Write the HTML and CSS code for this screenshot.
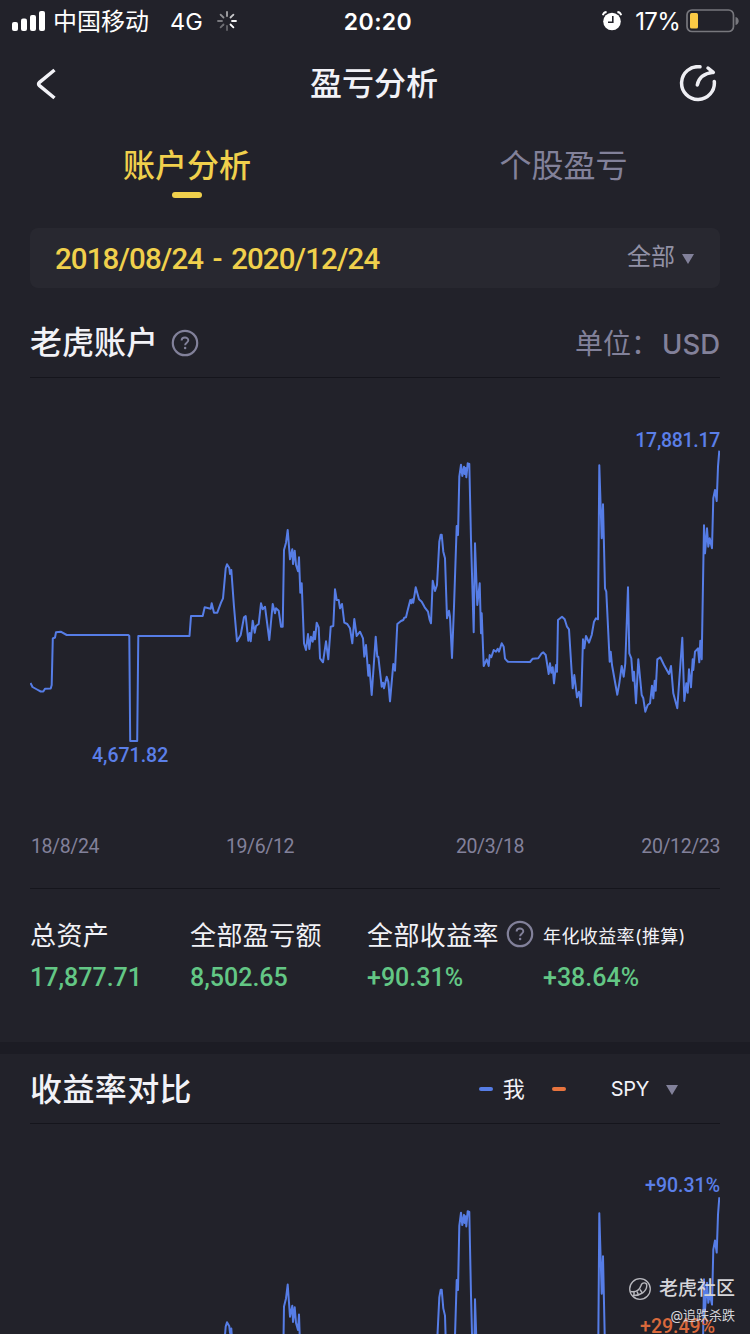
FILE: index.html
```
<!DOCTYPE html>
<html lang="zh-CN">
<head>
    <meta charset="UTF-8">
    <meta name="viewport" content="width=device-width, initial-scale=1.0">
    <title>盈亏分析</title>
    <link rel="stylesheet" href="styles.css">
</head>
<body>
    <div class="app">
        <div class="status-bar">
            <div class="status-left">
                <svg class="signal" width="34" height="20" viewBox="0 0 34 20" fill="#fff">
                    <rect x="0" y="11" width="6" height="9" rx="2"/>
                    <rect x="9" y="7.500" width="6" height="12.500" rx="2"/>
                    <rect x="18" y="4" width="6" height="16" rx="2"/>
                    <rect x="27" y="0" width="6" height="20" rx="2"/>
                </svg>
                <span class="carrier">中国移动</span>
                <span class="network">4G</span>
                <svg class="spinner" width="20" height="20" viewBox="-10 -10 20 20" stroke="#fff" stroke-width="1.800" stroke-linecap="round">
                    <path d="M0-5V-9" opacity=".6"/>
                    <path d="M3.500-3.500L6.400-6.400" opacity=".75"/>
                    <path d="M5 0H9" opacity=".95"/>
                    <path d="M3.500 3.500L6.400 6.400"/>
                    <path d="M0 5V9" opacity=".3"/>
                    <path d="M-3.500 3.500L-6.400 6.400" opacity=".35"/>
                    <path d="M-5 0H-9" opacity=".4"/>
                    <path d="M-3.500-3.500L-6.400-6.400" opacity=".5"/>
                </svg>
            </div>
            <span class="clock">20:20</span>
            <div class="status-right">
                <svg class="alarm" width="20" height="20" viewBox="0 0 20 20">
                    <circle cx="10" cy="10.500" r="8.800" fill="#fff"/>
                    <path d="M.8 4.200Q1.500 1.300 4.600 1M19.200 4.200Q18.500 1.300 15.400 1" fill="none" stroke="#fff" stroke-width="1.800"/>
                    <path d="M10.800 5V11.200H6" fill="none" stroke="#22222a" stroke-width="1.600"/>
                </svg>
                <span class="battery-text">17%</span>
                <svg class="battery" width="54" height="24" viewBox="0 0 54 24">
                    <rect x="1" y="1" width="46.500" height="21.500" rx="5" fill="none" stroke="#77777d" stroke-width="1.700"/>
                    <rect x="4" y="4" width="8" height="15.500" rx="1.500" fill="#fbca45"/>
                    <path d="M49.500 8C53.800 9 53.800 15 49.500 16Z" fill="#77777d"/>
                </svg>
            </div>
        </div>

        <div class="nav-bar">
            <svg class="back" width="22" height="32" viewBox="0 0 22 32">
                <path d="M19.500 2L4.500 14.300Q2.800 16 4.500 17.700L19.500 30" fill="none" stroke="#f2f2f7" stroke-width="3.500"/>
            </svg>
            <h1>盈亏分析</h1>
            <svg class="share" width="38" height="38" viewBox="0 0 38 38" fill="none" stroke="#eeeef3" stroke-width="3.500" stroke-linecap="round">
                <path d="M21 1.800A16.400 16.400 0 1 0 35.300 16.500"/>
                <path d="M18.300 20C19.500 13.500 25 8.500 34 7.300M29 3L34.300 7.300"/>
            </svg>
        </div>

        <div class="tabs">
            <div class="tab active">账户分析</div>
            <div class="tab">个股盈亏</div>
        </div>

        <div class="date-range">
            <span class="range-text">2018/08/24 - 2020/12/24</span>
            <span class="range-filter">全部<i class="caret"></i></span>
        </div>

        <div class="section account">
            <div class="section-header">
                <h2>老虎账户</h2>
                <svg class="help" width="28" height="28"><use href="#help"/></svg>
                <span class="unit">单位：<b>USD</b></span>
            </div>

            <div class="chart">
                <svg width="690" height="430" viewBox="30 378 690 430">
                    <defs>
                        <symbol id="help" viewBox="0 0 28 28">
                            <circle cx="14" cy="14" r="12.200" fill="none" stroke="#82819a" stroke-width="2.200"/>
                            <path d="M10.600 11.600C10.600 7.500 17.300 7.600 17.300 11.300C17.300 13.700 14.100 13.600 14.100 16.200" fill="none" stroke="#82819a" stroke-width="1.900"/>
                            <circle cx="14.100" cy="19" r="1.250" fill="#82819a"/>
                        </symbol>
                        <polyline id="curve" vector-effect="non-scaling-stroke" points="
                            30.500,683 32.500,687 37,689.500 40.700,691.500 43.300,691.500 45,688.700 50.700,688.500 51.700,685 52.800,638.500 55,637.500
                            56,632.300 60.700,631.700 66.700,635 128.300,635 129.300,636 130.200,741 137.200,741 138.300,636 189.500,636 191,616
                            202.700,616 204.700,607.300 210.700,608.700 211.700,603.300 214,612.700 217.300,612.700 221,602.700 223,598.300 225.700,568.300
                            227,564.300 229.300,568 230,574 231.300,570 234,606.700 237,641.300 240.700,635 244,617.300 245.700,616 248.300,640.700
                            249.700,633 250.700,641.300 252.700,620.700 254.700,632.700 256,626 258.700,624 261,603.300 262.700,609.300 265,606.700
                            269.300,640 272.700,604 275,613.300 276,608.300 278.700,610.700 281,626.700 282.700,626.700 284,550 286,542.700 287.700,530
                            290,559.300 292.300,549.300 293,564 294.700,550.700 296,565 298,571.300 299,557.300 300.300,592.700 301.700,583.300 304,643.300
                            306,650 308,634 309.300,649 311,636.700 312.700,641.700 314,631.700 315,639.300 316.700,622.700 318.700,627.300 320,658.300
                            323,662.300 326,641.300 328.300,659.300 330.700,626.700 333.300,626 335,589.300 336.700,600 338.700,600 340,608.300 342,604
                            344.300,622.700 347.300,624 350,628.300 352.300,643.300 354.300,619 356.700,636 360,631.700 363,638.300 364.300,656.700
                            366,645 368.300,675.700 369.300,665 371.700,695 375.700,636.700 377.300,656.700 378.300,656.700 381.700,686.700 383,682.700
                            384,688.300 386.700,676.700 388.300,681.700 390,701.300 393.300,664 395,670.700 397.300,624 401,621 403.300,620 404.300,617.700
                            406,617.300 407.300,611.700 410.300,600 411.300,603.300 412.300,599.300 413.300,602.700 415.700,587.300 419,599.300 421.700,601.700
                            424.700,607.300 428,611.700 429.700,620 431,623.300 432.700,580.700 435,591 437,585 439.300,541.700 440.700,534.700
                            441.700,534.700 443.300,551.700 445,558.300 447,618.300 449,610.700 450,616.700 452,658 454,606.700 456.700,526 458,535
                            459.300,476.700 461,464.700 462.300,476 464,466.700 464.700,474 465.700,468 466.300,477.300 467.700,463.300 469.300,464
                            471,540 473.700,632.300 475,543.300 477.300,605 479.700,583.300 481,633.300 481.700,613.300 483.700,666 486.700,659.300
                            488.700,666 489.700,655 491.300,657.300 493.700,650 496,651.700 497.700,648.700 499,651.700 501.700,643.300 503.700,646.700
                            505,658.700 507.700,661.700 530,662 532.700,658.700 538.300,658.300 541.700,653.300 543.300,652.300 545.700,655 548.700,674
                            550,663.300 551.300,672.700 552.700,667.300 554,683.300 556,665 557,671.700 558,620 562,616.700 564.700,619.300
                            567,626.700 569,629.300 572.700,688.300 574.300,675 577,697.300 579,691.700 581,706 583,639.300 584.300,648.300 586,636
                            589,642.700 591.700,635 594,621.700 596,618.300 598,619.300 599.300,465.300 601.700,538.300 603,504.300 605,588.300
                            606.300,591.700 609.700,661.700 610.700,651.700 612,665 617.300,694.700 619.300,683.300 621.700,666 623.700,676.700
                            625.300,663.300 628,587.300 629.300,653.300 631.300,658.300 633,680.700 634,671.700 636,703.300 638.300,659.300
                            641.700,695 643.300,698.300 645.300,711.700 647.700,705 650,703.300 652,685.700 653.300,698.300 654.700,680.700
                            655.700,690.700 657.300,659.300 660.300,657.300 664,665 669,674 671,666 673.300,693.300 677.300,708.300 680,670
                            682.300,637.700 684.300,701 686.300,683.300 687.700,692.700 689,669.300 691,687.300 692.700,659.300 693.300,670
                            695,651.700 698,648.300 699.300,662.300 700.300,640.700 701.700,659.300 704,525.300 705,553.300 707,528.300 708.300,546.700
                            709.700,538.300 712,548.300 713.300,498.300 715,490 716.700,501 718,466.700 719.300,450.700"/>
                    </defs>
                    <use href="#curve" class="line"/>
                </svg>
                <span class="max-label">17,881.17</span>
                <span class="min-label">4,671.82</span>
            </div>

            <div class="axis">
                <span>18/8/24</span>
                <span>19/6/12</span>
                <span>20/3/18</span>
                <span>20/12/23</span>
            </div>

            <div class="stats">
                <div class="stat-item">
                    <div class="stat-label">总资产</div>
                    <div class="stat-value">17,877.71</div>
                </div>
                <div class="stat-item">
                    <div class="stat-label">全部盈亏额</div>
                    <div class="stat-value">8,502.65</div>
                </div>
                <div class="stat-item">
                    <div class="stat-label">全部收益率<svg class="help" width="28" height="28"><use href="#help"/></svg></div>
                    <div class="stat-value">+90.31%</div>
                </div>
                <div class="stat-item">
                    <div class="stat-label small">年化收益率(推算)</div>
                    <div class="stat-value">+38.64%</div>
                </div>
            </div>
        </div>

        <div class="section compare">
            <div class="section-header">
                <h2>收益率对比</h2>
                <div class="legend">
                    <i class="dash me"></i>
                    <span class="legend-me">我</span>
                    <i class="dash spy"></i>
                    <span class="legend-spy">SPY</span>
                    <i class="caret"></i>
                </div>
            </div>
            <div class="chart">
                <svg width="690" height="210" viewBox="30 1124 690 210">
                    <use href="#curve" class="line" transform="translate(0 701.500) scale(1 1.100)"/>
                </svg>
                <span class="max-label">+90.31%</span>
                <span class="spy-label">+29.49%</span>
            </div>
        </div>

        <div class="watermark">
            <div class="watermark-brand">
                <svg width="24" height="24" viewBox="0 0 24 24" fill="none" stroke="#b9b9bf">
                    <circle cx="12" cy="12" r="10.300" stroke-width="1.300"/>
                    <path d="M2.500 14.500C8 15.500 11.500 13 13 8.500C14 5 18.800 5 18.800 8.500C18.500 14.500 12.500 19 5 18.500" stroke-width="1.400"/>
                    <path d="M6 15V18M9 14.500L10.500 18M12 12.500L14.200 15.800" stroke-width="1.500"/>
                </svg>
                <span>老虎社区</span>
            </div>
            <div class="watermark-user">@追跌杀跌</div>
        </div>
    </div>
</body>
</html>
```
FILE: styles.css
```
* {
    box-sizing: border-box;
}

body {
    margin: 0;
    background: #22222a;
    color: #f2f2f7;
    font-family: Inter, 'Noto Sans CJK SC', sans-serif;
}

h1, h2 {
    margin: 0;
    font-size: 32px;
    font-weight: 500;
    line-height: 48px;
}

svg {
    display: block;
    flex-shrink: 0;
}

.app {
    position: relative;
    width: 750px;
    height: 1334px;
    overflow: hidden;
}

/* status bar */
.status-bar {
    display: grid;
    grid-template-columns: 1fr auto 1fr;
    align-items: center;
    height: 40px;
    padding: 0 10px 0 12px;
    color: #fff;
    font-size: 24px;
    line-height: 40px;
}

.status-left, .status-right {
    display: flex;
    align-items: center;
}

.status-right {
    justify-content: flex-end;
}

.carrier {
    margin-left: 7px;
    padding-top: 1px;
}

.network {
    margin-left: 21px;
    padding-top: 2px;
    font-size: 23.5px;
}

.spinner {
    margin-left: 14px;
}

.clock {
    padding: 2px 0 0 4px;
    font-size: 23px;
    font-weight: 600;
    letter-spacing: 0.4px;
}

.battery-text {
    margin: 0 6px 0 13px;
    padding-top: 2px;
    letter-spacing: -0.7px;
}

/* navigation */
.nav-bar {
    display: flex;
    align-items: center;
    justify-content: space-between;
    height: 88px;
    padding: 0 33px 0 35px;
}

.back {
    margin-right: 12px;
}

.tabs {
    display: grid;
    grid-template-columns: 1fr 1fr;
    height: 100px;
}

.tab {
    display: flex;
    flex-direction: column;
    align-items: center;
    padding: 14px 0 0 2px;
    color: #82819a;
    font-size: 32px;
    line-height: 48px;
}

.tab.active {
    padding: 14px 1px 0 0;
    color: #f0d04c;
    font-weight: 500;
}

.tab.active::after {
    content: '';
    width: 30px;
    height: 6px;
    margin-top: 2px;
    border-radius: 3px;
    background: #f0d04c;
}

.date-range {
    display: flex;
    align-items: center;
    justify-content: space-between;
    height: 60px;
    margin: 0 30px;
    padding: 0 26px 0 25px;
    border-radius: 8px;
    background: #282830;
}

.range-text {
    padding-top: 2px;
    color: #f0d04c;
    font-family: Roboto, sans-serif;
    font-size: 29.5px;
    font-weight: 500;
    letter-spacing: -0.9px;
    word-spacing: 3px;
}

.range-filter {
    display: flex;
    align-items: center;
    gap: 7px;
    color: #9291a5;
    font-size: 24px;
    line-height: 34px;
    padding-bottom: 2px;
}

.caret {
    border: 6px solid transparent;
    border-top: 10px solid #82819a;
    border-bottom: 0;
}

.range-filter .caret {
    margin-top: 3px;
}

/* sections */
.section {
    padding: 0 30px;
}

.section-header {
    display: flex;
    align-items: center;
    border-bottom: 1px solid #15151c;
}

.account .section-header {
    height: 90px;
    padding-top: 20px;
}

.section-header .help {
    margin-left: 13px;
}

.unit {
    margin-left: auto;
    padding-bottom: 2px;
    color: #82819a;
    font-size: 28px;
}

.unit b {
    margin-left: 3px;
    font-size: 27.5px;
    font-weight: 500;
}

.chart {
    position: relative;
}

.line {
    fill: none;
    stroke: #567de6;
    stroke-width: 2;
    stroke-linejoin: round;
}

.max-label, .min-label, .spy-label {
    position: absolute;
    color: #5b7fe8;
    font-family: Roboto, sans-serif;
    font-size: 19.5px;
    font-weight: 500;
    line-height: 24px;
}

.account .max-label {
    top: 51px;
    right: 0;
    letter-spacing: -0.3px;
}

.min-label {
    top: 366px;
    left: 62px;
}

.axis {
    display: grid;
    grid-template-columns: 195px 230px 100px 1fr;
    height: 81px;
    padding: 27px 0 0 1px;
    border-bottom: 1px solid #15151c;
    color: #82819a;
    font-family: Roboto, sans-serif;
    font-size: 19.5px;
    line-height: 24px;
    letter-spacing: -0.4px;
}

.axis span:last-child {
    text-align: right;
}

.stats {
    display: grid;
    grid-template-columns: 160px 177px 176px 1fr;
    height: 153px;
    padding-top: 24px;
}

.stat-label {
    display: flex;
    align-items: center;
    height: 40px;
    font-size: 26px;
    letter-spacing: 0.4px;
    white-space: nowrap;
}

.stat-label.small {
    padding-top: 4px;
    font-size: 18px;
}

.stat-label .help {
    margin: 2px 0 0 7px;
}

.stat-value {
    padding-top: 2px;
    color: #63c785;
    font-family: Roboto, sans-serif;
    font-size: 25px;
    font-weight: 500;
    line-height: 46px;
}

.compare {
    border-top: 12px solid #1c1c24;
}

.compare .section-header {
    height: 70px;
}

.compare h2 {
    padding-top: 2px;
    letter-spacing: 0.4px;
}

.legend {
    display: flex;
    align-items: center;
    margin-left: auto;
    padding-right: 42px;
    font-size: 20px;
}

.dash {
    width: 14px;
    height: 4px;
    border-radius: 2px;
}

.dash.me {
    background: #567de6;
}

.dash.spy {
    background: #e8743e;
}

.legend-me {
    margin: 0 27px 0 10px;
    padding-bottom: 3px;
    font-size: 22px;
}

.legend-spy {
    margin: 0 17px 0 45px;
    letter-spacing: -0.3px;
}

.legend .caret {
    margin-top: 3px;
}

.compare .max-label {
    top: 50px;
    right: 0;
}

.spy-label {
    top: 191px;
    right: 5px;
    color: #d9693c;
}

/* community watermark, sits over the chart */
.watermark {
    position: absolute;
    right: 15px;
    bottom: 7px;
    color: #d6d6da;
}

.watermark-brand {
    display: flex;
    align-items: center;
    gap: 7px;
    font-size: 19px;
    font-weight: 500;
    line-height: 28px;
}

.watermark-user {
    font-size: 13px;
    line-height: 24px;
    text-align: right;
}
```
